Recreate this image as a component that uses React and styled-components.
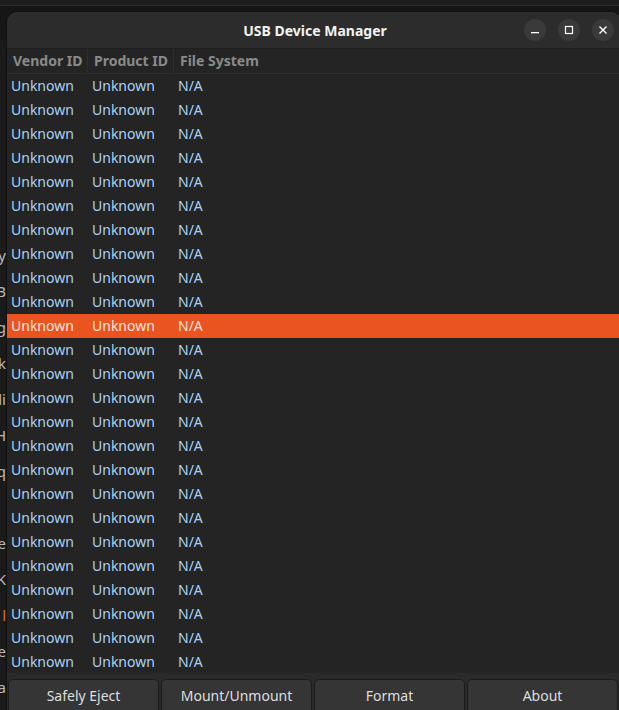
import React from 'react';
import styled, { createGlobalStyle } from 'styled-components';

const GlobalStyle = createGlobalStyle`
  html, body {
    margin: 0;
    padding: 0;
    background: #161616;
    overflow: hidden;
  }
  * {
    box-sizing: border-box;
  }
`;

const Desktop = styled.div`
  position: relative;
  width: 619px;
  height: 710px;
  overflow: hidden;
  background: #161616;
  font-family: "Noto Sans", "Open Sans", sans-serif;
`;

const TopStrip = styled.div`
  position: absolute;
  left: 0;
  top: 0;
  width: 100%;
  height: 6px;
  background: #1e1e1e;
  border-bottom: 1px solid #2a2a2a;
`;

const BackWindow = styled.div`
  position: absolute;
  left: -60px;
  top: 40px;
  width: 80px;
  height: 700px;
  background: #1a1a1a;
  display: flex;
  flex-direction: column;
  align-items: flex-end;
  padding-top: 197px;
`;

const BackLine = styled.div`
  height: 36px;
  line-height: 36px;
  font-size: 15px;
  color: ${(p) => (p.$accent ? '#d9761f' : '#b8b8b8')};
  padding-right: 14px;
`;

const Window = styled.div`
  position: absolute;
  left: 7px;
  top: 12px;
  width: 614px;
  height: 710px;
  background: #242424;
  border-radius: 10px 10px 0 0;
  box-shadow: 0 0 0 1px #101010;
  display: flex;
  flex-direction: column;
  overflow: hidden;
`;

const TitleBar = styled.div`
  position: relative;
  height: 37px;
  flex: none;
  background: #2c2c2c;
  border-bottom: 1px solid #1f1f1f;
  display: flex;
  align-items: center;
  justify-content: center;
`;

const Title = styled.div`
  font-size: 14px;
  font-weight: 700;
  color: #f2f2f2;
  margin-left: 2px;
`;

const Controls = styled.div`
  position: absolute;
  right: 7px;
  top: 7px;
  display: flex;
  gap: 12px;
`;

const ControlButton = styled.div`
  width: 22px;
  height: 22px;
  border-radius: 50%;
  background: #3a3a3a;
  display: flex;
  align-items: center;
  justify-content: center;
  color: #ffffff;
`;

const Table = styled.div`
  flex: none;
  height: 624px;
  display: flex;
  flex-direction: column;
`;

const Row = styled.div`
  display: grid;
  grid-template-columns: 81px 86px 1fr;
  height: 24px;
  align-items: center;
  background: ${(p) => (p.$selected ? '#e95420' : 'transparent')};
`;

const HeaderRow = styled(Row)`
  border-bottom: 1px solid #2e2e2e;
  height: 25px;
`;

const HeaderCell = styled.div`
  height: 100%;
  display: flex;
  align-items: center;
  padding-left: 6px;
  font-size: 14px;
  font-weight: 700;
  color: #8a8a8a;
  border-right: ${(p) => (p.$last ? 'none' : '1px solid #2e2e2e')};
`;

const Cell = styled.div`
  padding-left: 4px;
  font-size: 14px;
  color: ${(p) => (p.$selected ? '#fbe3dc' : '#a9d1f5')};
  white-space: nowrap;
`;

const ButtonBar = styled.div`
  flex: 1;
  background: #2a2a2a;
  padding: 6px 3px 0 1px;
  display: grid;
  grid-template-columns: repeat(4, 1fr);
  gap: 2px;
  align-items: start;
`;

const ActionButton = styled.button`
  height: 36px;
  background: #353535;
  border: 1px solid #1b1b1b;
  border-radius: 5px;
  color: #dedede;
  font-family: "Noto Sans", "Open Sans", sans-serif;
  font-size: 14px;
  padding: 0 0 3px;
`;

const backLetters = [
  'ay', 'B', 'g', 'k', 'li', 'H', 'q', '', 'e', 'K', 'l', 'e', 'a', 'l',
];

const rows = Array.from({ length: 25 }, (_, i) => i);

const App = () => {
  return (
    <>
      <GlobalStyle />
      <Desktop>
        <TopStrip />
        <BackWindow>
          {backLetters.map((l, i) => (
            <BackLine key={i} $accent={i === 10}>
              {l || '\u00a0'}
            </BackLine>
          ))}
        </BackWindow>
        <Window>
          <TitleBar>
            <Title>USB Device Manager</Title>
            <Controls>
              <ControlButton>
                <svg width="12" height="12" viewBox="0 0 12 12">
                  <rect x="2" y="8" width="8" height="1.3" fill="currentColor" />
                </svg>
              </ControlButton>
              <ControlButton>
                <svg width="12" height="12" viewBox="0 0 12 12">
                  <rect x="2.5" y="2.5" width="7" height="7" fill="none" stroke="currentColor" strokeWidth="1.2" />
                </svg>
              </ControlButton>
              <ControlButton>
                <svg width="12" height="12" viewBox="0 0 12 12">
                  <path d="M2.5 2.5 L9.5 9.5 M9.5 2.5 L2.5 9.5" stroke="currentColor" strokeWidth="1.4" />
                </svg>
              </ControlButton>
            </Controls>
          </TitleBar>
          <Table>
            <HeaderRow>
              <HeaderCell>Vendor ID</HeaderCell>
              <HeaderCell>Product ID</HeaderCell>
              <HeaderCell $last>File System</HeaderCell>
            </HeaderRow>
            {rows.map((i) => {
              const sel = i === 10;
              return (
                <Row key={i} $selected={sel}>
                  <Cell $selected={sel}>Unknown</Cell>
                  <Cell $selected={sel}>Unknown</Cell>
                  <Cell $selected={sel}>N/A</Cell>
                </Row>
              );
            })}
          </Table>
          <ButtonBar>
            <ActionButton>Safely Eject</ActionButton>
            <ActionButton>Mount/Unmount</ActionButton>
            <ActionButton>Format</ActionButton>
            <ActionButton>About</ActionButton>
          </ButtonBar>
        </Window>
      </Desktop>
    </>
  );
};

export default App;
